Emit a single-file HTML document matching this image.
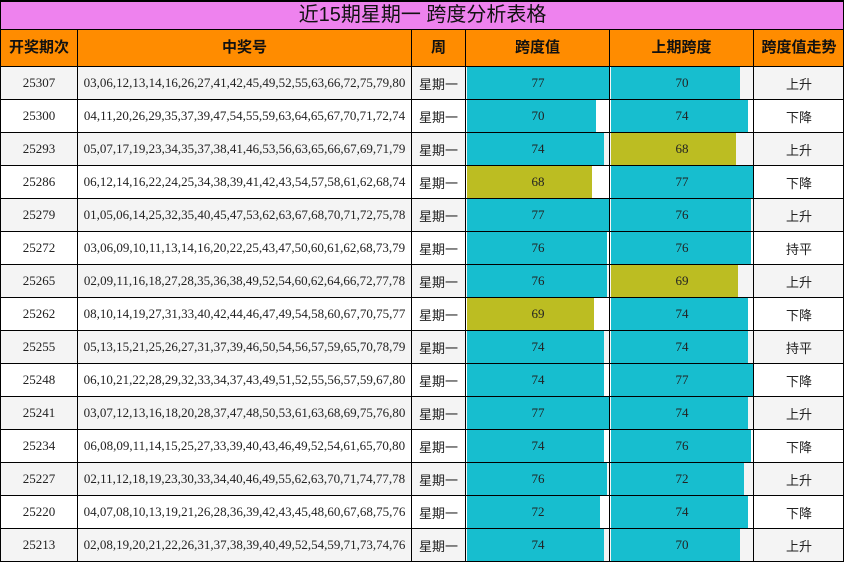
<!DOCTYPE html><html><head><meta charset="utf-8"><style>
body{margin:0;width:844px;height:562px;overflow:hidden;background:#fff;font-family:"Liberation Serif","Noto Sans CJK SC",serif;position:relative}
.c{position:absolute;box-sizing:border-box;border-left:1px solid #000;border-top:1px solid #000;text-align:center;font-size:13px;color:#222;overflow:hidden}
.b{position:absolute;left:1px;top:0;bottom:0}
.b span{position:absolute;left:0;width:142px;top:8px;line-height:15px;text-align:center}
</style></head><body>
<div id="r"></div>
<script>
var d=[["25307","03,06,12,13,14,16,26,27,41,42,45,49,52,55,63,66,72,75,79,80",77,70,"上升"],
["25300","04,11,20,26,29,35,37,39,47,54,55,59,63,64,65,67,70,71,72,74",70,74,"下降"],
["25293","05,07,17,19,23,34,35,37,38,41,46,53,56,63,65,66,67,69,71,79",74,68,"上升"],
["25286","06,12,14,16,22,24,25,34,38,39,41,42,43,54,57,58,61,62,68,74",68,77,"下降"],
["25279","01,05,06,14,25,32,35,40,45,47,53,62,63,67,68,70,71,72,75,78",77,76,"上升"],
["25272","03,06,09,10,11,13,14,16,20,22,25,43,47,50,60,61,62,68,73,79",76,76,"持平"],
["25265","02,09,11,16,18,27,28,35,36,38,49,52,54,60,62,64,66,72,77,78",76,69,"上升"],
["25262","08,10,14,19,27,31,33,40,42,44,46,47,49,54,58,60,67,70,75,77",69,74,"下降"],
["25255","05,13,15,21,25,26,27,31,37,39,46,50,54,56,57,59,65,70,78,79",74,74,"持平"],
["25248","06,10,21,22,28,29,32,33,34,37,43,49,51,52,55,56,57,59,67,80",74,77,"下降"],
["25241","03,07,12,13,16,18,20,28,37,47,48,50,53,61,63,68,69,75,76,80",77,74,"上升"],
["25234","06,08,09,11,14,15,25,27,33,39,40,43,46,49,52,54,61,65,70,80",74,76,"下降"],
["25227","02,11,12,18,19,23,30,33,34,40,46,49,55,62,63,70,71,74,77,78",76,72,"上升"],
["25220","04,07,08,10,13,19,21,26,28,36,39,42,43,45,48,60,67,68,75,76",72,74,"下降"],
["25213","02,08,19,20,21,22,26,31,37,38,39,40,49,52,54,59,71,73,74,76",74,70,"上升"]];
var X=[0,77,411,465,609,753,844];
function cell(x0,x1,y,h,bg,inner,st){return '<div class="c" style="left:'+x0+'px;top:'+y+'px;width:'+(x1-x0)+'px;height:'+h+'px;background:'+bg+';'+(st||'')+'">'+inner+'</div>';}
function bar(v){var c=v<70?"#bcbd22":"#17becf";return '<div class="b" style="width:'+Math.round(v*1.845)+'px;background:'+c+'"><span>'+v+'</span></div>';}
var h=cell(0,844,0,30,"#ee82ee","近15期星期一 跨度分析表格","border-top:2px solid #000;font-family:'Liberation Sans','Noto Sans CJK SC',sans-serif;font-size:20px;line-height:27px;color:#111");
var H=["开奖期次","中奖号","周","跨度值","上期跨度","跨度值走势"];
for(var i=0;i<6;i++)h+=cell(X[i],X[i+1],29,37,"#ff8c00",H[i],"font-family:'Liberation Sans','Noto Sans CJK SC',sans-serif;font-weight:bold;font-size:15px;line-height:36px;color:#111");
d.forEach(function(r,k){var y=66+33*k,bg=k%2?"#fff":"#f4f4f4";
var v=[r[0],r[1],"星期一",bar(r[2]),bar(r[3]),r[4]];
for(var i=0;i<6;i++){var st=(i==2||i==5)?"font-family:'Liberation Sans','Noto Sans CJK SC',sans-serif;line-height:36px":"line-height:32px";h+=cell(X[i],X[i+1],y,33,bg,v[i],st);}
});
h+='<div style="position:absolute;left:843px;top:0;width:1px;height:562px;background:#000"></div><div style="position:absolute;left:0;top:561px;width:844px;height:1px;background:#000"></div>';
document.getElementById("r").innerHTML=h;
</script>
</body></html>
